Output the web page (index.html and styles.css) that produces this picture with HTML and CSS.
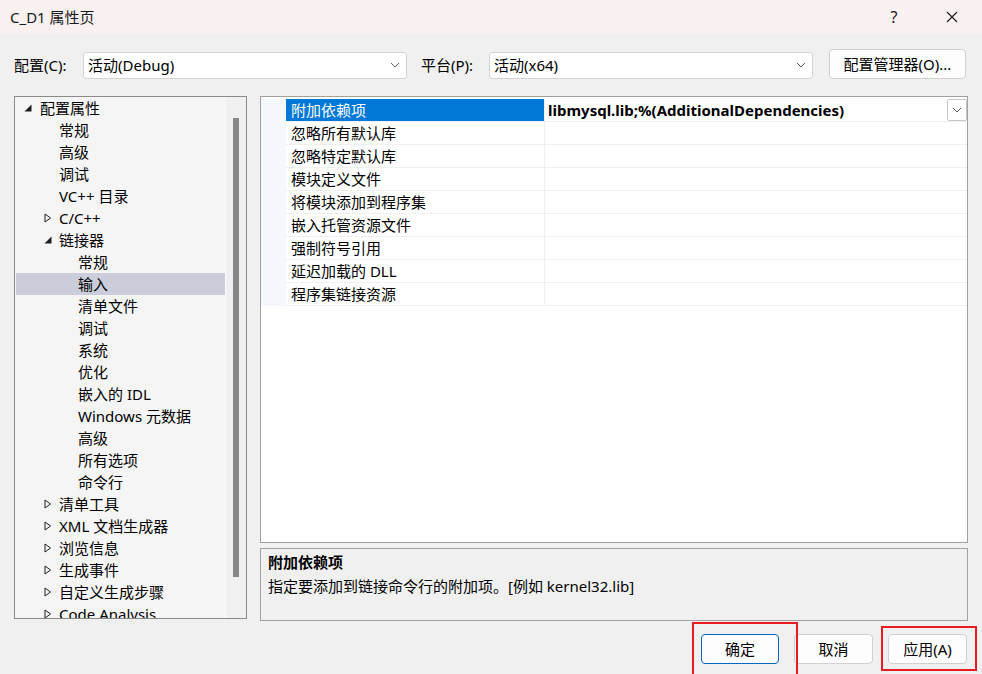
FILE: index.html
```html
<!DOCTYPE html>
<html lang="zh-CN">
<head>
<meta charset="utf-8">
<title>C_D1 属性页</title>
<link rel="stylesheet" href="styles.css">
</head>
<body>
<div class="window">
  <div class="titlebar">
    <span class="title">C_D1 属性页</span>
    <span class="tb-help">?</span>
    <span class="tb-close"><svg width="12" height="12" viewBox="0 0 12 12"><path d="M1 1 L11 11 M11 1 L1 11" stroke="#1a1a1a" stroke-width="1.1" fill="none"/></svg></span>
  </div>

  <div class="body">
    <div class="config-row">
      <span class="lbl lbl-config">配置(C):</span>
      <div class="combo combo-config"><span class="combo-text">活动(Debug)</span><svg class="chev" width="10" height="6" viewBox="0 0 10 6"><path d="M1 1 L5 5 L9 1" stroke="#5c5c5c" stroke-width="1" fill="none"/></svg></div>
      <span class="lbl lbl-platform">平台(P):</span>
      <div class="combo combo-platform"><span class="combo-text">活动(x64)</span><svg class="chev" width="10" height="6" viewBox="0 0 10 6"><path d="M1 1 L5 5 L9 1" stroke="#5c5c5c" stroke-width="1" fill="none"/></svg></div>
      <button class="btn btn-mgr">配置管理器(O)...</button>
    </div>

    <div class="content">
      <div class="tree">
        <ul class="tree-list">
          <li class="node l0"><span class="exp"><svg width="8" height="8" viewBox="0 0 8 8"><polygon points="7.5,0.5 7.5,7.5 0.5,7.5" fill="#1e1e1e"/></svg></span><span>配置属性</span></li>
          <li class="node l1"><span class="exp"></span><span>常规</span></li>
          <li class="node l1"><span class="exp"></span><span>高级</span></li>
          <li class="node l1"><span class="exp"></span><span>调试</span></li>
          <li class="node l1"><span class="exp"></span><span>VC++ 目录</span></li>
          <li class="node l1"><span class="exp"><svg width="8" height="10" viewBox="0 0 8 10"><polygon points="1,1 6.5,5 1,9" fill="none" stroke="#1e1e1e" stroke-width="1"/></svg></span><span>C/C++</span></li>
          <li class="node l1"><span class="exp"><svg width="8" height="8" viewBox="0 0 8 8"><polygon points="7.5,0.5 7.5,7.5 0.5,7.5" fill="#1e1e1e"/></svg></span><span>链接器</span></li>
          <li class="node l2"><span class="exp"></span><span>常规</span></li>
          <li class="node l2 selected"><span class="exp"></span><span>输入</span></li>
          <li class="node l2"><span class="exp"></span><span>清单文件</span></li>
          <li class="node l2"><span class="exp"></span><span>调试</span></li>
          <li class="node l2"><span class="exp"></span><span>系统</span></li>
          <li class="node l2"><span class="exp"></span><span>优化</span></li>
          <li class="node l2"><span class="exp"></span><span>嵌入的 IDL</span></li>
          <li class="node l2"><span class="exp"></span><span>Windows 元数据</span></li>
          <li class="node l2"><span class="exp"></span><span>高级</span></li>
          <li class="node l2"><span class="exp"></span><span>所有选项</span></li>
          <li class="node l2"><span class="exp"></span><span>命令行</span></li>
          <li class="node l1"><span class="exp"><svg width="8" height="10" viewBox="0 0 8 10"><polygon points="1,1 6.5,5 1,9" fill="none" stroke="#1e1e1e" stroke-width="1"/></svg></span><span>清单工具</span></li>
          <li class="node l1"><span class="exp"><svg width="8" height="10" viewBox="0 0 8 10"><polygon points="1,1 6.5,5 1,9" fill="none" stroke="#1e1e1e" stroke-width="1"/></svg></span><span>XML 文档生成器</span></li>
          <li class="node l1"><span class="exp"><svg width="8" height="10" viewBox="0 0 8 10"><polygon points="1,1 6.5,5 1,9" fill="none" stroke="#1e1e1e" stroke-width="1"/></svg></span><span>浏览信息</span></li>
          <li class="node l1"><span class="exp"><svg width="8" height="10" viewBox="0 0 8 10"><polygon points="1,1 6.5,5 1,9" fill="none" stroke="#1e1e1e" stroke-width="1"/></svg></span><span>生成事件</span></li>
          <li class="node l1"><span class="exp"><svg width="8" height="10" viewBox="0 0 8 10"><polygon points="1,1 6.5,5 1,9" fill="none" stroke="#1e1e1e" stroke-width="1"/></svg></span><span>自定义生成步骤</span></li>
          <li class="node l1 last"><span class="exp"><svg width="8" height="10" viewBox="0 0 8 10"><polygon points="1,1 6.5,5 1,9" fill="none" stroke="#1e1e1e" stroke-width="1"/></svg></span><span>Code Analysis</span></li>
        </ul>
        <div class="vscroll"><div class="thumb"></div></div>
      </div>

      <div class="right">
        <div class="grid">
          <div class="grow">
            <div class="gutter"></div>
            <div class="gname selected">附加依赖项</div>
            <div class="gval bold"><span class="gval-text">libmysql.lib;%(AdditionalDependencies)</span><span class="drop"><svg width="10" height="6" viewBox="0 0 10 6"><path d="M1 1 L5 5 L9 1" stroke="#5c5c5c" stroke-width="1" fill="none"/></svg></span></div>
          </div>
          <div class="grow"><div class="gutter"></div><div class="gname">忽略所有默认库</div><div class="gval"></div></div>
          <div class="grow"><div class="gutter"></div><div class="gname">忽略特定默认库</div><div class="gval"></div></div>
          <div class="grow"><div class="gutter"></div><div class="gname">模块定义文件</div><div class="gval"></div></div>
          <div class="grow"><div class="gutter"></div><div class="gname">将模块添加到程序集</div><div class="gval"></div></div>
          <div class="grow"><div class="gutter"></div><div class="gname">嵌入托管资源文件</div><div class="gval"></div></div>
          <div class="grow"><div class="gutter"></div><div class="gname">强制符号引用</div><div class="gval"></div></div>
          <div class="grow"><div class="gutter"></div><div class="gname">延迟加载的 DLL</div><div class="gval"></div></div>
          <div class="grow"><div class="gutter"></div><div class="gname">程序集链接资源</div><div class="gval"></div></div>
        </div>
        <div class="desc">
          <div class="desc-title">附加依赖项</div>
          <div class="desc-text">指定要添加到链接命令行的附加项。[例如 kernel32.lib]</div>
        </div>
      </div>
    </div>

    <div class="buttons">
      <button class="btn btn-ok">确定</button>
      <button class="btn btn-cancel">取消</button>
      <button class="btn btn-apply">应用(A)</button>
    </div>
  </div>

  <div class="mark mark-ok"></div>
  <div class="mark mark-apply"></div>
</div>
</body>
</html>
```

FILE: styles.css
```css
* { box-sizing: border-box; }
html, body { margin: 0; padding: 0; }
body {
  font-family: "Segoe UI", "Noto Sans", "Noto Sans CJK SC", sans-serif;
  font-size: 15px;
  color: #000;
  background: #f0f0f0;
}
.window {
  position: relative;
  width: 982px;
  height: 674px;
  overflow: hidden;
  background: #f0f0f0;
}
.titlebar {
  height: 34px;
  display: flex;
  align-items: center;
  padding-left: 10px;
  background: #f8f1f0;
  color: #1a1a1a;
}
.title { flex: 1; line-height: 20px; }
.tb-help { width: 24px; text-align: center; line-height: 20px; font-size: 16px; }
.tb-close {
  width: 24px;
  margin-left: 34px;
  margin-right: 18px;
  display: flex;
  justify-content: center;
  align-items: center;
}

.body { padding: 0 14px; }

.config-row {
  display: flex;
  align-items: center;
  height: 30px;
  margin-top: 15px;
}
.lbl { line-height: 20px; white-space: nowrap; position: relative; top: 1px; }
.lbl-config { width: 69px; }
.lbl-platform { width: 68px; margin-left: 14px; }
.combo {
  width: 324px;
  height: 27px;
  margin-top: 2px;
  background: #fff;
  border: 1px solid #d3d3d3;
  border-radius: 3px;
  display: flex;
  align-items: center;
  padding-left: 4px;
  padding-right: 6px;
}
.combo-text { flex: 1; line-height: 20px; }
.chev { display: block; }

.btn {
  font-family: inherit;
  font-size: 15px;
  color: #000;
  background: #fdfdfd;
  border: 1px solid #d0d0d0;
  border-radius: 4px;
  height: 30px;
  padding: 0;
  line-height: 20px;
}
.btn-mgr { width: 137px; margin-left: 16px; }

.content {
  display: flex;
  align-items: flex-start;
  gap: 13px;
  margin-top: 17px;
}

.tree {
  width: 233px;
  height: 523px;
  border: 1px solid #8a8a8a;
  background: #f5f5f5;
  display: flex;
  overflow: hidden;
}
.tree-list {
  list-style: none;
  margin: 0;
  padding: 0 0 0 1px;
  width: 210px;
  flex: none;
}
.node {
  height: 22px;
  display: flex;
  align-items: center;
  line-height: 20px;
  white-space: nowrap;
}
.node.selected { background: #cbcdda; }
.exp {
  width: 16px;
  flex: none;
  display: flex;
  align-items: center;
}
.exp svg { display: block; }
.l0 { padding-left: 8px; }
.l1 { padding-left: 27px; }
.l2 { padding-left: 46px; }
.l1 .exp svg { margin-left: 1px; }

.vscroll {
  flex: 1;
  border-left: 1px solid #fbfbfb;
  background: #f0f0f0;
  padding-top: 21px;
  padding-left: 7px;
}
.thumb {
  width: 6px;
  height: 459px;
  background: #868686;
}

.right {
  width: 708px;
  display: flex;
  flex-direction: column;
  gap: 5px;
}
.grid {
  height: 447px;
  border: 1px solid #a0a0a0;
  background: #fff;
  padding-top: 2px;
}
.grow {
  display: flex;
  height: 23px;
}
.gutter {
  width: 25px;
  flex: none;
  background: #f4f7fc;
}
.gname {
  width: 259px;
  flex: none;
  height: 23px;
  padding-left: 5px;
  line-height: 22px;
  border-bottom: 1px solid #f0f0f0;
  border-right: 1px solid #f0f0f0;
  white-space: nowrap;
}
.gname.selected {
  background: #0078d7;
  color: #fff;
  background-clip: padding-box;
}
.gval {
  flex: 1;
  height: 23px;
  border-bottom: 1px solid #f0f0f0;
  display: flex;
  align-items: flex-start;
  padding-left: 3px;
  line-height: 22px;
  white-space: nowrap;
}
.gval.bold { font-weight: 700; }
.gval-text { flex: 1; }
.drop {
  width: 20px;
  height: 22px;
  border: 1px solid #c6c6c6;
  border-radius: 2px;
  background: #fff;
  display: flex;
  align-items: center;
  justify-content: center;
}
.drop svg { display: block; }

.desc {
  height: 73px;
  border: 1px solid #a0a0a0;
  background: #f0f0f0;
  padding: 3px 7px 0;
}
.desc-title { font-weight: 700; line-height: 20px; }
.desc-text { margin-top: 3px; line-height: 22px; }

.buttons {
  display: flex;
  justify-content: flex-end;
  gap: 15px;
  margin-top: 13px;
  padding-right: 1px;
}
.btn-ok { width: 78px; border-color: #0067c0; }
.btn-cancel { width: 79px; }
.btn-apply { width: 79px; }

.mark {
  position: absolute;
  border: 2px solid #e81a22;
}
.mark-ok { left: 692px; top: 622px; width: 106px; height: 60px; }
.mark-apply { left: 881px; top: 626px; width: 96px; height: 45px; }
```
